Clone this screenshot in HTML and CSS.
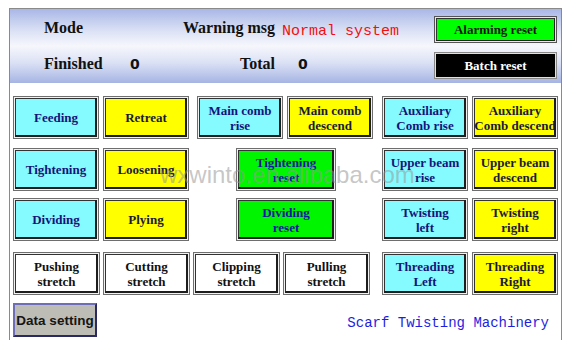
FILE: index.html
```html
<!DOCTYPE html>
<html lang="en">
<head>
<meta charset="UTF-8" />
<meta name="viewport" content="width=device-width, initial-scale=1" />
<title>Scarf Twisting Machinery</title>
<link rel="stylesheet" href="styles.css">
</head>
<body>
  <div class="panel">
    <div class="header">
      <span class="label mode">Mode</span>
      <span class="label right">Warning msg</span>
      <span class="status">Normal system</span>
      <button class="hbtn alarm">Alarming reset</button>
      <span class="label">Finished</span>
      <span class="count">0</span>
      <span class="label right">Total</span>
      <span class="count total">0</span>
      <button class="hbtn batch">Batch reset</button>
    </div>

    <div class="row first">
      <div class="left">
        <div class="pair">
          <button class="btn cyan">Feeding</button>
          <button class="btn yellow">Retreat</button>
        </div>
        <div class="pair">
          <button class="btn cyan">Main comb<br>rise</button>
          <button class="btn yellow">Main comb<br>descend</button>
        </div>
      </div>
      <div class="pair right-pair">
        <button class="btn cyan">Auxiliary<br>Comb rise</button>
        <button class="btn yellow">Auxiliary<br>Comb descend</button>
      </div>
    </div>

    <div class="row second">
      <div class="left">
        <div class="pair">
          <button class="btn cyan">Tightening</button>
          <button class="btn yellow">Loosening</button>
        </div>
        <button class="btn green wide">Tightening<br>reset</button>
      </div>
      <div class="pair right-pair">
        <button class="btn cyan">Upper beam<br>rise</button>
        <button class="btn yellow">Upper beam<br>descend</button>
      </div>
    </div>

    <div class="row third">
      <div class="left">
        <div class="pair">
          <button class="btn cyan">Dividing</button>
          <button class="btn yellow">Plying</button>
        </div>
        <button class="btn green wide">Dividing<br>reset</button>
      </div>
      <div class="pair right-pair">
        <button class="btn cyan">Twisting<br>left</button>
        <button class="btn yellow">Twisting<br>right</button>
      </div>
    </div>

    <div class="row fourth">
      <div class="left quad">
        <button class="btn white">Pushing<br>stretch</button>
        <button class="btn white">Cutting<br>stretch</button>
        <button class="btn white">Clipping<br>stretch</button>
        <button class="btn white">Pulling<br>stretch</button>
      </div>
      <div class="pair right-pair">
        <button class="btn cyan">Threading<br>Left</button>
        <button class="btn yellow">Threading<br>Right</button>
      </div>
    </div>

    <div class="footer">
      <button class="data-btn">Data setting</button>
      <span class="machine">Scarf Twisting Machinery</span>
    </div>

    <div class="watermark">wxwinto.en.alibaba.com</div>
  </div>
</body>
</html>
```

FILE: styles.css
```css
body {
  margin: 0;
  background: white;
  font-family: "Liberation Serif", "Times New Roman", serif;
}
.panel {
  position: relative;
  margin: 8px 0 0 9px;
  width: 551px;
  height: 331px;
  border: 1px solid #8a8a8a;
  border-bottom: none;
}
.header {
  display: grid;
  grid-template-columns: 86px 50px 95px 7px 152px 123px;
  grid-template-rows: 27px 27px;
  row-gap: 9px;
  align-items: center;
  height: 74px;
  box-sizing: border-box;
  padding: 7px 0 0 34px;
  background: linear-gradient(to bottom, #a9b7e6 0%, #dce2f5 30%, #f6f7fc 50%, #dce2f5 72%, #a6b4e3 100%);
}
.label {
  font-weight: bold;
  font-size: 16px;
  color: #111;
  padding-bottom: 3px;
}
.mode {
  grid-column: 1 / 3;
}
.right {
  text-align: right;
}
.status {
  grid-column: 5;
  font-family: "Liberation Mono", monospace;
  font-size: 15px;
  color: #f01010;
  padding-top: 4px;
}
.count {
  font-family: "DejaVu Sans", sans-serif;
  font-weight: bold;
  font-size: 14px;
  color: #111;
  padding-bottom: 3px;
}
.total {
  grid-column: 5;
  padding-left: 16px;
}
.hbtn {
  height: 27px;
  padding: 0;
  font-family: "Liberation Serif", serif;
  font-weight: bold;
  font-size: 13px;
  border: 1px solid #555;
  box-shadow: inset 0 0 0 1px #e8e8e8, inset -2px -2px 0 0 #222, inset 0 0 0 2px #333;
}
.alarm {
  background: #00ff00;
  color: #151515;
}
.batch {
  background: #000;
  color: #fff;
  border-color: #888;
  box-shadow: inset 0 0 0 1px #e0e0e0;
}
.row {
  display: flex;
  margin-left: 3px;
}
.row.first {
  margin-top: 13px;
}
.row.second {
  margin-top: 9px;
}
.row.third {
  margin-top: 7px;
}
.row.fourth {
  margin-top: 11px;
}
.left {
  display: flex;
  gap: 8px;
  width: 360px;
}
.pair {
  display: flex;
  gap: 4px;
}
.right-pair {
  margin-left: 9px;
}
.quad {
  gap: 3px;
}
.btn {
  width: 86px;
  height: 43px;
  padding: 0;
  font-family: "Liberation Serif", serif;
  font-weight: bold;
  font-size: 13px;
  line-height: 15px;
  white-space: nowrap;
  border: 1px solid #6e6e6e;
  box-shadow: inset 0 0 0 1px #f2f2f2, inset -3px -3px 0 0 #1e1e1e, inset 0 0 0 2px #333;
}
.cyan {
  background: #86fbff;
  color: #14147a;
}
.yellow {
  background: #ffff00;
  color: #1a1a3a;
}
.green {
  background: #00f500;
  color: #1414a0;
}
.white {
  background: #fff;
  color: #111;
}
.wide {
  width: 100px;
  margin-left: 39px;
}
.quad .btn {
  width: 87px;
}
.footer {
  display: flex;
  align-items: center;
  justify-content: space-between;
  margin: 8px 12px 0 3px;
}
.data-btn {
  width: 84px;
  height: 34px;
  padding: 0;
  background: #bebdb5;
  color: #151515;
  font-family: "Liberation Sans", Arial, sans-serif;
  font-weight: bold;
  font-size: 13.5px;
  border: 2px solid #2a2a60;
  border-left-color: #6d6db8;
  border-top-color: #6d6db8;
}
.machine {
  font-family: "Liberation Mono", monospace;
  font-size: 14px;
  color: #1e1ee0;
  padding-top: 6px;
}
.watermark {
  position: absolute;
  left: 150px;
  top: 152px;
  font-family: "Liberation Sans", Arial, sans-serif;
  font-size: 24px;
  color: rgba(150, 150, 150, 0.55);
  pointer-events: none;
}
```
